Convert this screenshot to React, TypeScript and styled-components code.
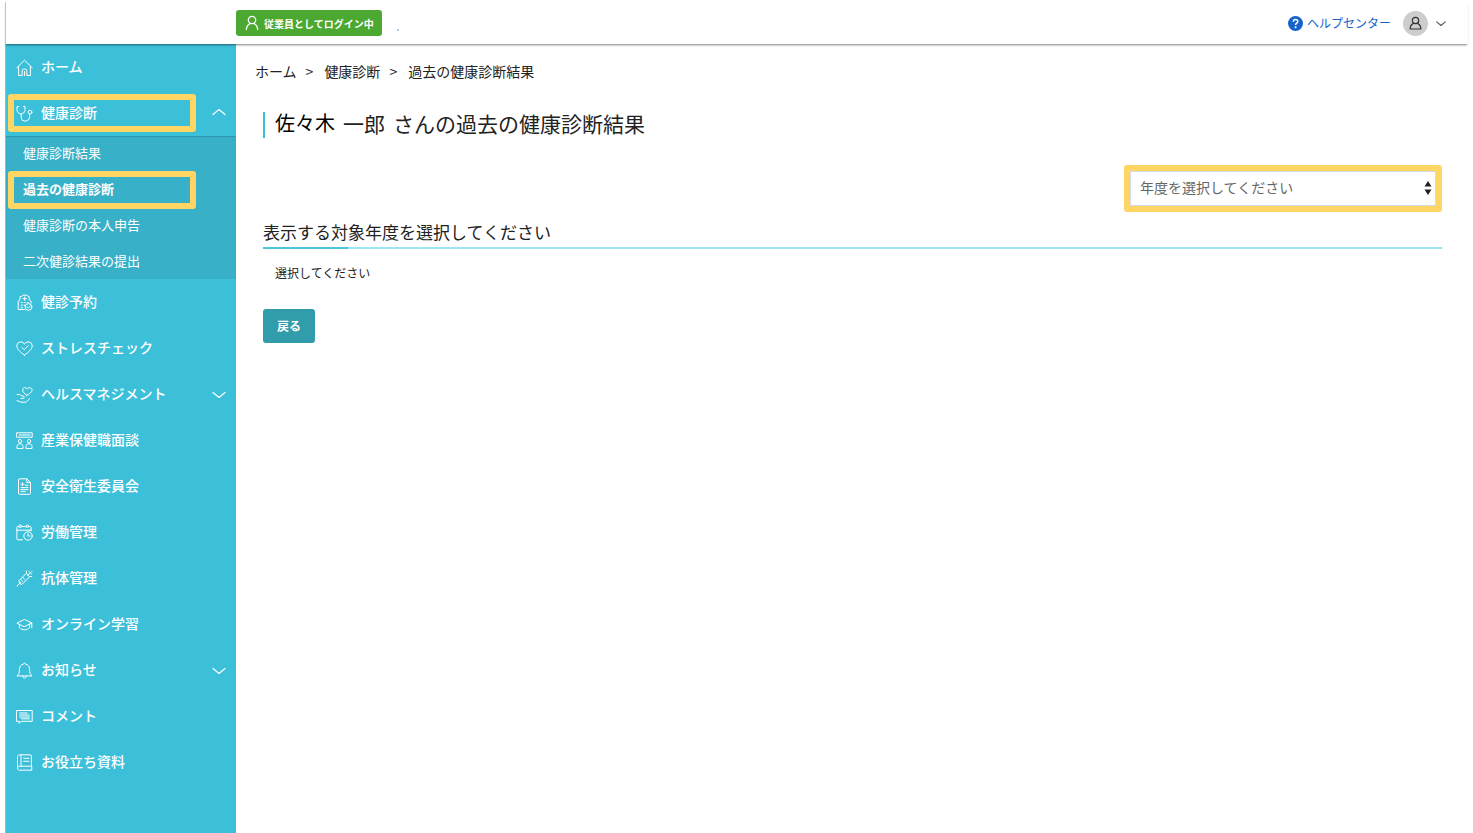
import React from "react";
import styled, { createGlobalStyle } from "styled-components";

const color = {
  teal: "#3cc0da",
  tealDark: "#38b0c8",
  rule: "#9be6f0",
  button: "#319caa",
  green: "#4ba831",
  blue: "#1763cc",
  mark: "#ffd663",
  text: "#222",
};

const GlobalStyle = createGlobalStyle`
  *, *::before, *::after { box-sizing: border-box; }
  body {
    margin: 0;
    background: #fff;
    color: ${color.text};
    font-family: "Noto Sans CJK JP", sans-serif;
    font-size: 14px;
  }
  a { color: inherit; text-decoration: none; }
  ul, ol { list-style: none; margin: 0; padding: 0; }
`;

const Page = styled.div`
  display: flex;
  flex-direction: column;
  min-height: 100vh;
  padding: 2px 5px 0;
`;

const Header = styled.header`
  position: relative;
  z-index: 1;
  display: flex;
  align-items: center;
  height: 42px;
  padding: 0 22px 0 230px;
  border-left: 1px solid #c4c4c4;
  background: #fff;
  box-shadow: 0 2px 2px -1px rgba(0, 0, 0, 0.5);
`;

const LoginBadge = styled.div`
  display: flex;
  align-items: center;
  gap: 5px;
  height: 26px;
  padding: 0 8px 0 9px;
  border-radius: 3px;
  background: ${color.green};
  color: #fff;
  font-size: 10px;
  font-weight: 700;
`;

const Dot = styled.span`
  align-self: flex-end;
  width: 2px;
  height: 2px;
  margin: 0 0 13px 15px;
  background: #a9cdf0;
`;

const HeaderTools = styled.div`
  display: flex;
  align-items: center;
  margin-left: auto;
`;

const HelpLink = styled.a`
  display: flex;
  align-items: center;
  gap: 4px;
  color: ${color.blue};
  font-size: 12px;
  line-height: 16px;
`;

const AccountButton = styled.button`
  display: flex;
  align-items: center;
  gap: 8px;
  margin-left: 12px;
  padding: 0;
  border: 0;
  background: none;
  color: #555;
`;

const Avatar = styled.span`
  display: grid;
  place-items: center;
  width: 25px;
  height: 25px;
  border-radius: 50%;
  background: #cdcdcd;
  color: #333;
`;

const Body = styled.div`
  flex: 1;
  display: flex;
`;

const Sidebar = styled.nav`
  flex: 0 0 231px;
  border-left: 1px solid #8fbcc6;
  background: ${color.teal};
  color: #fff;
`;

const NavLink = styled.a`
  position: relative;
  display: flex;
  align-items: center;
  gap: 8px;
  height: 46px;
  padding: 0 10px;
  font-weight: 500;
`;

const NavLabel = styled.span`
  flex: 1;
  padding-bottom: 2px;
`;

const SubMenu = styled.ul`
  display: grid;
  gap: 1px;
  background: ${color.tealDark};
  box-shadow: inset 0 1px 1px rgba(0, 0, 0, 0.15);
`;

const SubLink = styled.a<{ $current?: boolean }>`
  position: relative;
  display: flex;
  align-items: center;
  height: 35px;
  padding: 0 17px 2px;
  font-size: 13px;
  font-weight: ${(p) => (p.$current ? 700 : 400)};
`;

/* Yellow frame laid over a menu entry to point it out. */
const Marker = styled.span`
  position: absolute;
  top: 50%;
  left: 2px;
  width: 188px;
  height: 38px;
  margin-top: -19px;
  border: 6px solid ${color.mark};
  border-radius: 3px;
`;

const Main = styled.main`
  flex: 1;
  min-width: 0;
  padding: 17px 26px 24px 19px;
`;

const Breadcrumb = styled.ol`
  display: flex;
  height: 20px;
  line-height: 20px;
`;

const Crumb = styled.li`
  & + &::before {
    content: ">";
    margin: 0 11px 0 9px;
  }
`;

const Content = styled.div`
  padding-left: 8px;
`;

const Title = styled.h1`
  display: flex;
  gap: 8px;
  height: 26px;
  margin: 31px 0 27px;
  padding-left: 10px;
  border-left: 2px solid ${color.teal};
  font-size: 21px;
  font-weight: 400;
  line-height: 22px;
`;

const FamilyName = styled.span`
  color: #000;
  font-size: 20px;
`;

const YearField = styled.div`
  position: relative;
  width: 318px;
  margin-left: auto;
  border: 6px solid ${color.mark};
  border-radius: 3px;
  background: #fff;
`;

const YearSelect = styled.select`
  display: block;
  width: 100%;
  height: 35px;
  padding: 0 24px 3px 9px;
  border: 1px solid #d5dbe6;
  border-radius: 0;
  appearance: none;
  background: #fff;
  color: #666;
  font: inherit;
`;

const SelectArrows = styled.svg`
  position: absolute;
  top: 9px;
  right: 4px;
  pointer-events: none;
`;

const SectionTitle = styled.h2`
  margin: 8px 0 0;
  padding-bottom: 5px;
  background: linear-gradient(to right, #4cc6da 85px, ${color.rule} 85px) bottom / 100% 2px no-repeat;
  font-size: 17px;
  font-weight: 400;
  line-height: 24px;
`;

const Message = styled.p`
  margin: 14px 0 26px 12px;
  font-size: 12px;
  line-height: 20px;
`;

const BackButton = styled.button`
  display: block;
  height: 34px;
  padding: 0 14px 2px;
  border: 0;
  border-radius: 3px;
  background: ${color.button};
  color: #fff;
  font-family: inherit;
  font-size: 12px;
  font-weight: 700;
`;

const LineIcon = styled.svg`
  flex: none;
  fill: none;
  stroke: currentColor;
  stroke-linecap: round;
  stroke-linejoin: round;
`;

const icons: Record<string, React.ReactNode> = {
  home: (
    <path d="M.8 8.8 8.5 1.2l7.7 7.6M2.6 7.6v8.9h3.6v-5a1.4 1.4 0 0 1 1.4-1.4h1.8a1.4 1.4 0 0 1 1.4 1.4v5h3.6V7.6M8.5 12.5v4" />
  ),
  stethoscope: (
    <>
      <path d="M2.8 1.5H1v3.2c0 2.5 1.7 4.2 4 4.2s4-1.7 4-4.2V1.5H7.5M5.2 9v3.5a3.6 3.6 0 0 0 3.6 3.6c2.7 0 4.8-1.5 4.8-4.3V9" />
      <circle cx="14" cy="7.2" r="1.9" />
    </>
  ),
  hospital: (
    <>
      <path d="M8.5 15.5H2.2V7.2L4 5.7V2.6h1.5L7 1.2h4l1.2 1.4h1v3.1L15 7.2v2M8.7 3v3.4M7 4.7h3.4M5.2 8.5h1M8.2 8.5h1M11.2 8.5h1M5.2 11.2h1M8 11.2h.6M5.2 13.6h1" />
      <circle cx="12.5" cy="13" r="3.4" />
      <path d="m11 13 1.2 1.2 2.2-2.2" />
    </>
  ),
  heartCheck: (
    <>
      <path d="M8.5 15.2C4.5 12 .8 9.4.8 5.9a4 4 0 0 1 7.7-1.6 4 4 0 0 1 7.7 1.6c0 3.5-3.7 6.1-7.7 9.3z" />
      <path d="m6 7.5 2.2 2.2 4-4" />
    </>
  ),
  handHeart: (
    <>
      <path d="M10.8 9.4C8 7.2 6.7 5.9 6.7 4.1c0-2.8 3.3-3.3 4.4-1.2 1.5-2.1 5-1.2 5 1.2 0 2-2.4 3.6-5.3 5.3z" />
      <path d="M1 8.5h2.2c1.6 0 2 1.7 4 1.7 1.7 0 1.5 2.2-.2 2.2H5M1 14.6c1.7 0 2.2 1.6 5 1.6h3.4c1.5 0 2.2-2 4.2-3.6" />
    </>
  ),
  meeting: (
    <>
      <path d="M.8.8h15.4v4.4H.8zM3 3h11" />
      <circle cx="4" cy="9.2" r="1.7" />
      <circle cx="13" cy="9.2" r="1.7" />
      <path d="M1 16.2v-1.6c0-1.8 1.2-2.8 3-2.8s3 1 3 2.8v1.6zM10 16.2v-1.6c0-1.8 1.2-2.8 3-2.8s3 1 3 2.8v1.6z" />
    </>
  ),
  document: (
    <path d="M2.5 1.6c0-.5.4-.8.8-.8h7.5l3.7 3.7v11c0 .5-.4.8-.8.8H3.3c-.4 0-.8-.3-.8-.8zM10.8.8v3.7h3.7M5 6.2h3M6.5 4.7v3M9.5 7.2h2.5M5 9.6h7M5 11.6h7M5 13.6h4" />
  ),
  calendar: (
    <>
      <path d="M6.5 15.8H1.7a.8.8 0 0 1-.8-.8V3.4c0-.4.4-.8.8-.8h1.5M5.2 2.6h5M12.3 2.6h2c.5 0 .8.4.8.8v3.4M1 6.2h14" />
      <circle cx="4.2" cy="2.2" r="1.3" />
      <circle cx="11.3" cy="2.2" r="1.3" />
      <circle cx="12" cy="12" r="4.2" />
      <path d="M12 9.7V12h1.8" />
    </>
  ),
  syringe: (
    <path d="m.8 16.2 4-4M3.6 13.4l-.7-2.7 7.3-7.3 3.4 3.4-7.3 7.3zM5 9.8l1.5 1.5M7 7.7l1.6 1.6M11.9 5.1l2.4-2.4M13 1.4 15.7 4M10.5 1v2M15.8 6.5h-2M15.8 1.4h.2" />
  ),
  graduation: (
    <path d="m1.2 7 7.3-3.6L15.8 7l-7.3 3.6zM3.4 8.3v3.4c2.8 2.8 7.4 2.8 10.2 0V8.3M15.8 7v4.8" />
  ),
  bell: (
    <path d="M1.2 13.7c1.6-1.3 2.2-2.5 2.2-6.2 0-3 1.6-5 4.2-5.4 0-1.3 1.8-1.3 1.8 0 2.6.4 4.2 2.4 4.2 5.4 0 3.7.6 4.9 2.2 6.2zM6.5 13.9c0 3 4 3 4 0" />
  ),
  comment: (
    <path d="M.8 2.5h15.4v10.8H5.2l-2 2v-2H.8zM3.7 5h7.5M3.7 7h9.6M3.7 9h9.6M5.5 10.8h7.8" />
  ),
  book: (
    <path d="M15.4 12.2H3.6c-2.8 0-2.8 4 0 4h11.8zM15.4 12.2V2c0-.8-.4-1.2-1.2-1.2H3.6C2.4.8 1.5 1.6 1.5 2.7v11.6M5 .8v11.4M7.7 4.3H13M7.7 7.3H13" />
  ),
};

function NavIcon({ name }: { name: string }) {
  return (
    <LineIcon width="17" height="17" viewBox="0 0 17 17" aria-hidden="true">
      {icons[name]}
    </LineIcon>
  );
}

function Chevron({ up, width = 14 }: { up?: boolean; width?: number }) {
  return (
    <LineIcon width={width} height="10" viewBox="0 0 14 10" aria-hidden="true">
      <path d={up ? "M1 6.5l6-5 6 5" : "M1 3.5l6 5 6-5"} strokeWidth={width < 14 ? 1.5 : 1.2} />
    </LineIcon>
  );
}

type Item = {
  label: string;
  icon: string;
  chevron?: "up" | "down";
  marked?: boolean;
  children?: { label: string; current?: boolean }[];
};

const items: Item[] = [
  { label: "ホーム", icon: "home" },
  {
    label: "健康診断",
    icon: "stethoscope",
    chevron: "up",
    marked: true,
    children: [
      { label: "健康診断結果" },
      { label: "過去の健康診断", current: true },
      { label: "健康診断の本人申告" },
      { label: "二次健診結果の提出" },
    ],
  },
  { label: "健診予約", icon: "hospital" },
  { label: "ストレスチェック", icon: "heartCheck" },
  { label: "ヘルスマネジメント", icon: "handHeart", chevron: "down" },
  { label: "産業保健職面談", icon: "meeting" },
  { label: "安全衛生委員会", icon: "document" },
  { label: "労働管理", icon: "calendar" },
  { label: "抗体管理", icon: "syringe" },
  { label: "オンライン学習", icon: "graduation" },
  { label: "お知らせ", icon: "bell", chevron: "down" },
  { label: "コメント", icon: "comment" },
  { label: "お役立ち資料", icon: "book" },
];

export default function App() {
  return (
    <>
      <GlobalStyle />
      <Page>
        <Header>
          <LoginBadge>
            <LineIcon width="14" height="16" viewBox="0 0 14 16" aria-hidden="true">
              <circle cx="7" cy="5" r="3.7" strokeWidth="1.3" />
              <path d="M1.4 14.6c0-3 1.6-5 3.6-6M12.6 14.6c0-3-1.6-5-3.6-6" strokeWidth="1.3" />
            </LineIcon>
            従業員としてログイン中
          </LoginBadge>
          <Dot aria-hidden="true" />
          <HeaderTools>
            <HelpLink href="#help">
              <svg width="15" height="15" viewBox="0 0 15 15" aria-hidden="true">
                <circle cx="7.5" cy="7.5" r="7.5" fill={color.blue} />
                <path
                  d="M5.3 5.8c0-3 4.5-2.8 4.5-.2 0 1.6-2.2 1.6-2.2 3.3"
                  fill="none"
                  stroke="#fff"
                  strokeWidth="1.5"
                />
                <circle cx="7.6" cy="11.2" r="1" fill="#fff" />
              </svg>
              ヘルプセンター
            </HelpLink>
            <AccountButton type="button" aria-label="アカウント">
              <Avatar>
                <LineIcon width="13" height="15" viewBox="0 0 13 15" aria-hidden="true">
                  <circle cx="6.5" cy="4.5" r="3.2" strokeWidth="1.2" />
                  <path d="M4.6 7.4C2.4 8.3 1.2 10 1.2 13h10.6c0-3-1.2-4.7-3.4-5.6" strokeWidth="1.2" />
                </LineIcon>
              </Avatar>
              <Chevron width={10} />
            </AccountButton>
          </HeaderTools>
        </Header>
        <Body>
          <Sidebar>
            <ul>
              {items.map((item) => (
                <li key={item.label}>
                  <NavLink href="#">
                    <NavIcon name={item.icon} />
                    <NavLabel>{item.label}</NavLabel>
                    {item.chevron && <Chevron up={item.chevron === "up"} />}
                    {item.marked && <Marker />}
                  </NavLink>
                  {item.children && (
                    <SubMenu>
                      {item.children.map((child) => (
                        <li key={child.label}>
                          <SubLink href="#" $current={child.current}>
                            {child.label}
                            {child.current && <Marker />}
                          </SubLink>
                        </li>
                      ))}
                    </SubMenu>
                  )}
                </li>
              ))}
            </ul>
          </Sidebar>
          <Main>
            <Breadcrumb>
              <Crumb>
                <a href="#">ホーム</a>
              </Crumb>
              <Crumb>
                <a href="#">健康診断</a>
              </Crumb>
              <Crumb>過去の健康診断結果</Crumb>
            </Breadcrumb>
            <Content>
              <Title>
                <FamilyName>佐々木</FamilyName>
                <span>一郎</span>
                <span>さんの過去の健康診断結果</span>
              </Title>
              <YearField>
                <YearSelect aria-label="年度" defaultValue="">
                  <option value="">年度を選択してください</option>
                </YearSelect>
                <SelectArrows width="8" height="16" viewBox="0 0 8 16" aria-hidden="true">
                  <path d="M4 1l3.5 5.5h-7zM4 15L.5 9.5h7z" fill="#222" />
                </SelectArrows>
              </YearField>
              <SectionTitle>表示する対象年度を選択してください</SectionTitle>
              <Message>選択してください</Message>
              <BackButton type="button">戻る</BackButton>
            </Content>
          </Main>
        </Body>
      </Page>
    </>
  );
}
